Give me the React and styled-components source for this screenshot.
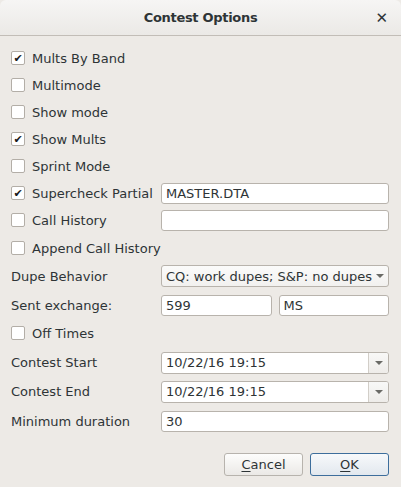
import { createGlobalStyle, styled } from "styled-components";

const Global = createGlobalStyle`
  html, body {
    margin: 0;
    padding: 0;
    background: #edeae6;
  }
  body {
    font-family: "DejaVu Sans", "Liberation Sans", sans-serif;
    font-size: 13px;
    color: #2e3436;
  }
`;

const Dialog = styled.div`
  width: 401px;
  height: 487px;
  display: flex;
  flex-direction: column;
  background: #edeae6;
  overflow: hidden;
`;

const TitleBar = styled.div`
  height: 35px;
  flex: none;
  display: grid;
  grid-template-columns: 1fr auto 1fr;
  align-items: center;
  background: linear-gradient(#f6f5f4, #ebe9e6);
  border-bottom: 1px solid #c2bdb7;
  border-radius: 6px 6px 0 0;
`;

const Title = styled.div`
  grid-column: 2;
  font-weight: bold;
  font-size: 13px;
  letter-spacing: -0.3px;
  color: #2e3436;
`;

const Close = styled.div`
  justify-self: end;
  margin-right: 13px;
  font-size: 15px;
  font-weight: bold;
  color: #2e3436;
`;

const Form = styled.div`
  display: grid;
  grid-template-columns: 150px 1fr;
  padding: 11px 12px 0 11px;
`;

const Row = styled.div`
  grid-column: 1 / -1;
  display: grid;
  grid-template-columns: 150px 1fr;
  align-items: center;
  height: ${(p) => p.$h || 22}px;
  margin-bottom: ${(p) => p.$gap ?? 5}px;
`;

const Check = styled.label`
  display: flex;
  align-items: center;
  gap: 7px;
  white-space: nowrap;
`;

const Box = styled.span`
  width: 12px;
  height: 12px;
  border: 1px solid #b3aea7;
  border-radius: 2px;
  background: #fff;
  display: flex;
  align-items: center;
  justify-content: center;
  font-size: 11px;
  font-weight: bold;
  line-height: 1;
  color: #1a1a1a;
`;

const Label = styled.span`
  white-space: nowrap;
`;

const Field = styled.div`
  height: ${(p) => p.$h || 21}px;
  box-sizing: border-box;
  border: 1px solid #b8b3ac;
  border-radius: 3px;
  background: #fff;
  display: flex;
  align-items: center;
  padding-left: 4px;
  white-space: nowrap;
  overflow: hidden;
`;

const Pair = styled.div`
  display: grid;
  grid-template-columns: 1fr 1fr;
  gap: 7px;
`;

const Combo = styled.div`
  height: ${(p) => p.$h || 22}px;
  box-sizing: border-box;
  border: 1px solid #b8b3ac;
  border-radius: 3px;
  background: ${(p) => (p.$flat ? "linear-gradient(#fbfbfa, #f2f1ef)" : "#fff")};
  display: flex;
  align-items: center;
  overflow: hidden;
`;

const ComboText = styled.span`
  flex: 1;
  padding-left: 4px;
  white-space: nowrap;
`;

const Arrow = styled.span`
  width: ${(p) => (p.$split ? 19 : 16)}px;
  align-self: stretch;
  display: flex;
  align-items: center;
  justify-content: center;
  border-left: ${(p) => (p.$split ? "1px solid #d2cec8" : "none")};
  background: ${(p) => (p.$split ? "linear-gradient(#f8f8f7, #eeece9)" : "transparent")};
  &::after {
    content: "";
    border-left: 4px solid transparent;
    border-right: 4px solid transparent;
    border-top: 4px solid #6a6a66;
  }
`;

const Buttons = styled.div`
  display: flex;
  justify-content: flex-end;
  gap: 7px;
  padding: 21px 12px 0 0;
`;

const Button = styled.div`
  width: 79px;
  height: 23px;
  box-sizing: border-box;
  border: 1px solid ${(p) => (p.$primary ? "#3d6e9c" : "#b7b3ad")};
  border-radius: 3px;
  background: ${(p) =>
    p.$primary
      ? "linear-gradient(#f7f9fb, #e2e8ee)"
      : "linear-gradient(#fdfdfc, #ebe9e6)"};
  display: flex;
  align-items: center;
  justify-content: center;
  & u {
    text-decoration-thickness: 1px;
    text-underline-offset: 2px;
  }
`;

const CheckItem = ({ checked, children }) => (
  <Check>
    <Box>{checked ? "✔" : ""}</Box>
    {children}
  </Check>
);

export default function App() {
  return (
    <>
      <Global />
      <Dialog>
        <TitleBar>
          <Title>Contest Options</Title>
          <Close>✕</Close>
        </TitleBar>
        <Form>
          <Row><CheckItem checked>Mults By Band</CheckItem></Row>
          <Row><CheckItem>Multimode</CheckItem></Row>
          <Row><CheckItem>Show mode</CheckItem></Row>
          <Row><CheckItem checked>Show Mults</CheckItem></Row>
          <Row><CheckItem>Sprint Mode</CheckItem></Row>
          <Row>
            <CheckItem checked>Supercheck Partial</CheckItem>
            <Field>MASTER.DTA</Field>
          </Row>
          <Row $gap={6}>
            <CheckItem>Call History</CheckItem>
            <Field />
          </Row>
          <Row $gap={6}>
            <CheckItem>Append Call History</CheckItem>
          </Row>
          <Row $gap={7}>
            <Label>Dupe Behavior</Label>
            <Combo $flat>
              <ComboText>CQ: work dupes; S&amp;P: no dupes</ComboText>
              <Arrow />
            </Combo>
          </Row>
          <Row $gap={6}>
            <Label>Sent exchange:</Label>
            <Pair>
              <Field>599</Field>
              <Field>MS</Field>
            </Pair>
          </Row>
          <Row $gap={7}>
            <CheckItem>Off Times</CheckItem>
          </Row>
          <Row $h={23} $gap={6}>
            <Label>Contest Start</Label>
            <Combo>
              <ComboText>10/22/16 19:15</ComboText>
              <Arrow $split />
            </Combo>
          </Row>
          <Row $h={23} $gap={7}>
            <Label>Contest End</Label>
            <Combo>
              <ComboText>10/22/16 19:15</ComboText>
              <Arrow $split />
            </Combo>
          </Row>
          <Row $gap={0}>
            <Label>Minimum duration</Label>
            <Field>30</Field>
          </Row>
        </Form>
        <Buttons>
          <Button><span><u>C</u>ancel</span></Button>
          <Button $primary><span><u>O</u>K</span></Button>
        </Buttons>
      </Dialog>
    </>
  );
}
